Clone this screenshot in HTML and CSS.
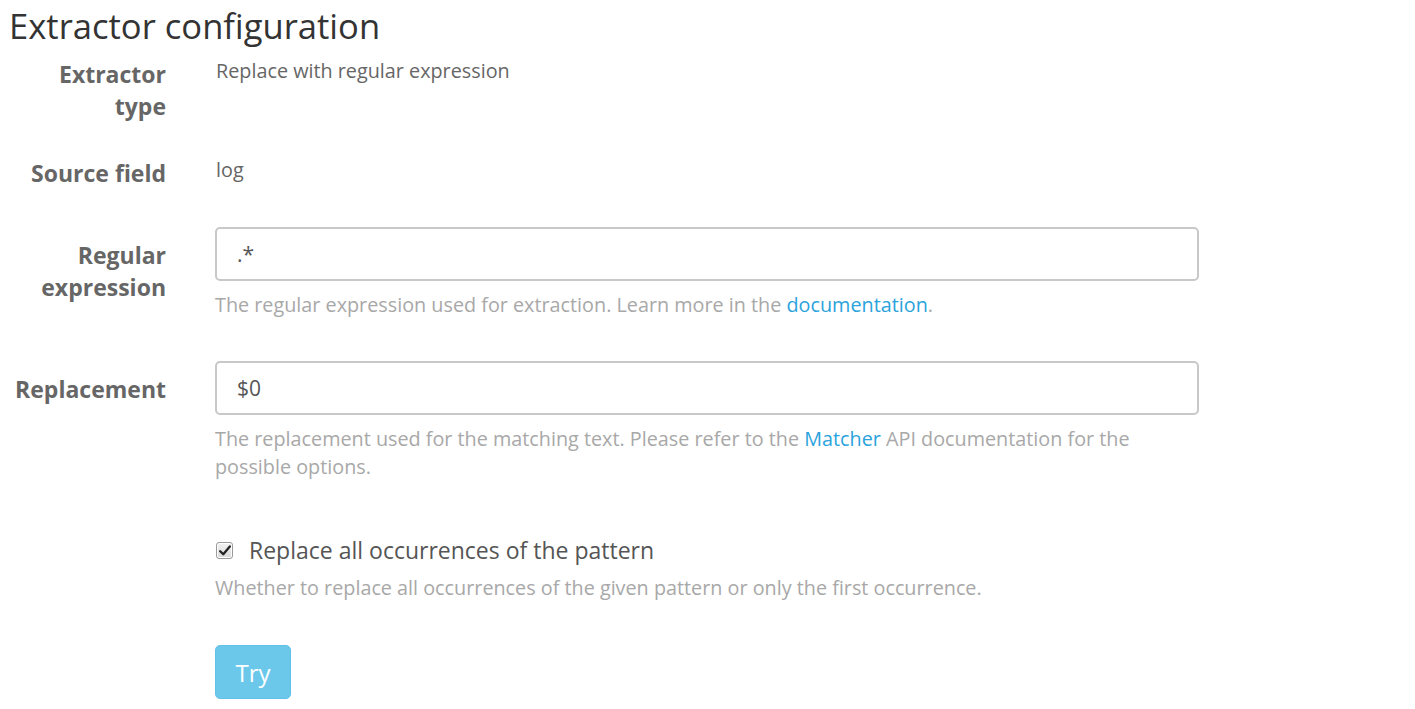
FILE: index.html
```html
<!DOCTYPE html>
<html>
<head>
<meta charset="utf-8">
<link rel="stylesheet" href="styles.css">
</head>
<body>
<div class="page">
  <h1 class="title">Extractor configuration</h1>
  <div class="form">
    <div class="row row-type">
      <div class="label">Extractor type</div>
      <div class="control"><p class="static">Replace with regular expression</p></div>
    </div>
    <div class="row row-source">
      <div class="label">Source field</div>
      <div class="control"><p class="static">log</p></div>
    </div>
    <div class="row row-regex">
      <div class="label">Regular expression</div>
      <div class="control">
        <div class="input">.*</div>
        <p class="help">The regular expression used for extraction. Learn more in the <a href="#">documentation</a>.</p>
      </div>
    </div>
    <div class="row row-repl">
      <div class="label">Replacement</div>
      <div class="control">
        <div class="input">$0</div>
        <p class="help">The replacement used for the matching text. Please refer to the <a href="#">Matcher</a> API documentation for the possible options.</p>
      </div>
    </div>
    <div class="row row-check">
      <div class="label"></div>
      <div class="control">
        <div class="check">
          <span class="box"><svg width="12" height="11" viewBox="0 0 12 11"><path d="M1.2 6.2 L4.3 9.3 L10.8 1.5" fill="none" stroke="#222" stroke-width="2.3" stroke-linecap="round" stroke-linejoin="round"/></svg></span>
          <span class="check-text">Replace all occurrences of the pattern</span>
        </div>
        <p class="help">Whether to replace all occurrences of the given pattern or only the first occurrence.</p>
      </div>
    </div>
    <div class="row row-btn">
      <div class="label"></div>
      <div class="control"><button class="btn">Try</button></div>
    </div>
  </div>
</div>
</body>
</html>
```
FILE: styles.css
```css
* { box-sizing: border-box; }
body {
  margin: 0;
  font-family: "Open Sans", "Liberation Sans", sans-serif;
  color: #666;
  background: #fff;
}
.page { padding: 0 9px; }
.title {
  margin: 0;
  padding-top: 6px;
  font-size: 34.6px;
  font-weight: 400;
  color: #333;
  line-height: 40px;
  height: 46px;
}
.form { width: 1190px; }
.row {
  display: flex;
  gap: 49px;
}
.label {
  width: 157px;
  flex: none;
  text-align: right;
  font-weight: 700;
  font-size: 23px;
  line-height: 32px;
  color: #666;
  padding-top: 12px;
}
.control { flex: 1; }
.static {
  margin: 0;
  padding-top: 11px;
  padding-left: 1px;
  font-size: 19.8px;
  line-height: 28px;
  color: #666;
}
.row-source { margin-top: 23px; }
.row-regex { margin-top: 38px; }
.row-repl { margin-top: 42px; }
.row-check { margin-top: 53px; }
.row-btn { margin-top: 43px; }
.input {
  display: flex;
  align-items: center;
  width: 100%;
  height: 54px;
  border: 2px solid #c8c8c8;
  border-radius: 5px;
  padding: 0 20px;
  font-size: 21px;
  color: #555;
  background: #fff;
}
.help {
  margin: 10px 0 0;
  font-size: 19.8px;
  line-height: 28px;
  color: #a8a8a8;
}
.help a { color: #2ba3dc; text-decoration: none; }
.check {
  display: flex;
  align-items: center;
  gap: 16px;
  height: 32px;
}
.box {
  width: 17px;
  height: 17px;
  flex: none;
  margin-left: 1px;
  border: 1px solid #9a9a9a;
  border-radius: 3px;
  background: linear-gradient(#f2f2f2, #d8d8d8);
  display: flex;
  align-items: center;
  justify-content: center;
  box-shadow: inset 0 0 0 1px #fff;
}
.check-text {
  font-size: 23px;
  color: #555;
  line-height: 32px;
}
.row-check .help { margin-top: 8px; }
.btn {
  display: block;
  background: #6bc8eb;
  color: #fff;
  border: 1px solid #62c1e6;
  border-radius: 5px;
  font-family: inherit;
  font-size: 24px;
  width: 76px;
  height: 54px;
  padding: 0;
}
```
